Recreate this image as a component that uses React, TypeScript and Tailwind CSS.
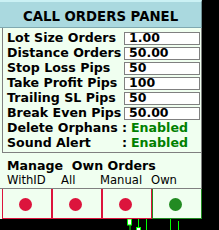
import React from 'react';

const bold = "font-['DejaVu_Sans',sans-serif] font-bold";

const inputs = [
  { label: 'Lot Size Orders', value: '1.00' },
  { label: 'Distance Orders', value: '50.00' },
  { label: 'Stop Loss Pips', value: '50' },
  { label: 'Take Profit Pips', value: '100' },
  { label: 'Trailing SL Pips', value: '50' },
  { label: 'Break Even Pips', value: '50.00' },
];

const toggles = [
  { label: 'Delete Orphans', value: 'Enabled' },
  { label: 'Sound Alert', value: 'Enabled' },
];

const buttons = [
  { label: 'WithID', border: 'border-[#DC143C]', dot: 'bg-[#DC143C]' },
  { label: 'All', border: 'border-[#DC143C]', dot: 'bg-[#DC143C]' },
  { label: 'Manual', border: 'border-[#DC143C]', dot: 'bg-[#DC143C]' },
  { label: 'Own', border: 'border-[#228B22]', dot: 'bg-[#228B22]' },
];

const Candles: React.FC = () => (
  <svg className="absolute left-0 top-[219px]" width="219" height="11" viewBox="0 0 219 11">
    <line x1="130" y1="6" x2="130" y2="11" stroke="#00ff00" />
    <rect x="127.5" y="0" width="4" height="6" fill="#fff" stroke="#00ff00" />
    <line x1="138.5" y1="0" x2="138.5" y2="9" stroke="#00ff00" />
    <rect x="136.5" y="8.5" width="4" height="3" fill="#fff" stroke="#00ff00" />
    <line x1="146.5" y1="0" x2="146.5" y2="11" stroke="#00ff00" />
    <line x1="170.5" y1="0" x2="170.5" y2="11" stroke="#00ff00" />
    <line x1="178.5" y1="2" x2="178.5" y2="11" stroke="#00ff00" />
  </svg>
);

const App: React.FC = () => {
  return (
    <div className="relative w-[219px] h-[230px] bg-black overflow-hidden">
      <div className="w-[202px] h-[219px] bg-[#F0FFF0] flex flex-col text-black">
        <div className={`h-[28px] border-t-2 border-t-[#CBF1F4] border-b border-b-[#7FA9B0] border-r border-r-[#6F8F95] bg-[#AAD9DF] pt-[7px] text-center text-[13.3px] leading-[16px] ${bold}`}>
          CALL ORDERS PANEL
        </div>

        <div className="ml-[2px] border-l border-r border-b border-[#808080] pt-[2px] pb-[2px] pl-[4px] flex flex-col">
          {inputs.map((r) => (
            <div key={r.label} className="flex h-[15px]">
              <span className={`w-[117px] text-[12.6px] leading-[15px] whitespace-nowrap ${bold}`}>{r.label}</span>
              <div className="w-[76px] h-[13px] mt-[2px] border border-[#808080] bg-white pl-[4px]">
                <span className={`block text-[12.5px] leading-[9px] ${bold}`}>{r.value}</span>
              </div>
            </div>
          ))}
          {toggles.map((r) => (
            <div key={r.label} className={`flex h-[15px] text-[12.6px] leading-[15px] whitespace-nowrap ${bold}`}>
              <span className="w-[115px]">{r.label}</span>
              <span className="w-[9px]">:</span>
              <span className="text-[#008000]">{r.value}</span>
            </div>
          ))}
        </div>

        <div className="h-[36px] border-b border-r border-[#808080] pt-[5px] pl-[7px]">
          <div className={`text-[12.6px] leading-[15px] whitespace-pre ${bold}`}>Manage  Own Orders</div>
          <div className="flex text-[11.6px] leading-[15px] font-['DejaVu_Sans',sans-serif]">
            <span className="w-[54px]">WithID</span>
            <span className="w-[39px]">All</span>
            <span className="w-[51px]">Manual</span>
            <span>Own</span>
          </div>
        </div>

        <div className="ml-[2px] flex h-[30px]">
          {buttons.map((b) => (
            <div
              key={b.label}
              className={`w-[50px] h-[30px] border-l border-r border-b ${b.border} flex items-center justify-center pr-[3px] pt-[1px]`}
            >
              <div className={`w-[13px] h-[13px] rounded-full ${b.dot}`} />
            </div>
          ))}
        </div>
      </div>
      <Candles />
    </div>
  );
};

export default App;
